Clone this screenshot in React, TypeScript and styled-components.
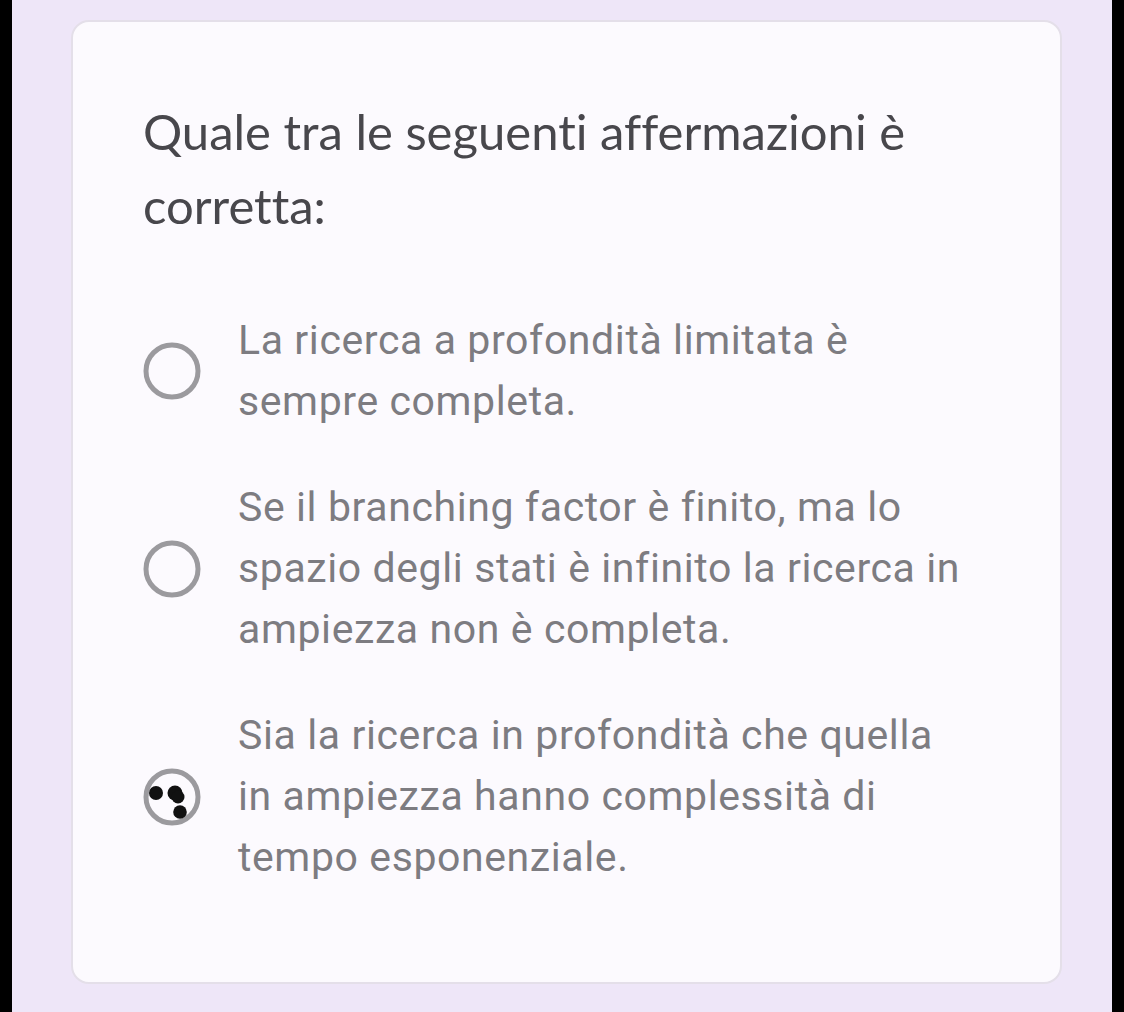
import React from "react";
import styled, { createGlobalStyle } from "styled-components";

const GlobalStyle = createGlobalStyle`
  html, body {
    margin: 0;
    padding: 0;
    background: #000000;
  }
`;

interface Choice {
  id: string;
  lines: string;
  marked?: boolean;
}

const choices: Choice[] = [
  { id: "a", lines: "La ricerca a profondità limitata è sempre completa." },
  {
    id: "b",
    lines:
      "Se il branching factor è finito, ma lo spazio degli stati è infinito la ricerca in ampiezza non è completa.",
  },
  {
    id: "c",
    lines:
      "Sia la ricerca in profondità che quella in ampiezza hanno complessità di tempo esponenziale.",
    marked: true,
  },
];

const RadioMark: React.FC<{ marked?: boolean }> = ({ marked }) => (
  <Radio>
    <svg width="58" height="58" viewBox="0 0 58 58">
      <circle cx="29" cy="29" r="26" fill="none" stroke="#9b9a9e" strokeWidth="5" />
      {marked && (
        <g fill="#111111">
          <circle cx="13" cy="25" r="7" />
          <circle cx="32" cy="25" r="7.5" />
          <circle cx="35" cy="29" r="6.5" />
          <circle cx="37" cy="44" r="6.8" />
        </g>
      )}
    </svg>
  </Radio>
);

export default function App() {
  return (
    <>
      <GlobalStyle />
      <Screen>
        <Card>
          <Question>Quale tra le seguenti affermazioni è corretta:</Question>
          <Options>
            {choices.map((c) => (
              <Option key={c.id}>
                <RadioMark marked={c.marked} />
                <Label>{c.lines}</Label>
              </Option>
            ))}
          </Options>
        </Card>
      </Screen>
    </>
  );
}

const Screen = styled.div`
  box-sizing: border-box;
  width: 1100px;
  height: 1012px;
  margin-left: 12px;
  background: #eee6f8;
  padding: 20px 50px 28px 59px;
`;

const Card = styled.div`
  box-sizing: border-box;
  height: 964px;
  background: #fcfafe;
  border: 2px solid #e4dfe9;
  border-radius: 18px;
  padding: 72px 70px 0 70px;
`;

const Question = styled.div`
  font-family: Lato, sans-serif;
  font-size: 49px;
  font-variant-ligatures: none;
  line-height: 74px;
  color: #48474c;
  width: 800px;
`;

const Options = styled.div`
  display: flex;
  flex-direction: column;
  gap: 45px;
  margin-top: 68px;
`;

const Option = styled.div`
  display: flex;
  align-items: center;
  gap: 37px;
`;

const Radio = styled.div`
  flex: none;
  width: 58px;
  height: 58px;
  display: flex;
`;

const Label = styled.div`
  font-family: Roboto, sans-serif;
  font-size: 41px;
  font-variant-ligatures: none;
  letter-spacing: 0.6px;
  line-height: 61px;
  color: #7d7c81;
  width: 735px;
`;
